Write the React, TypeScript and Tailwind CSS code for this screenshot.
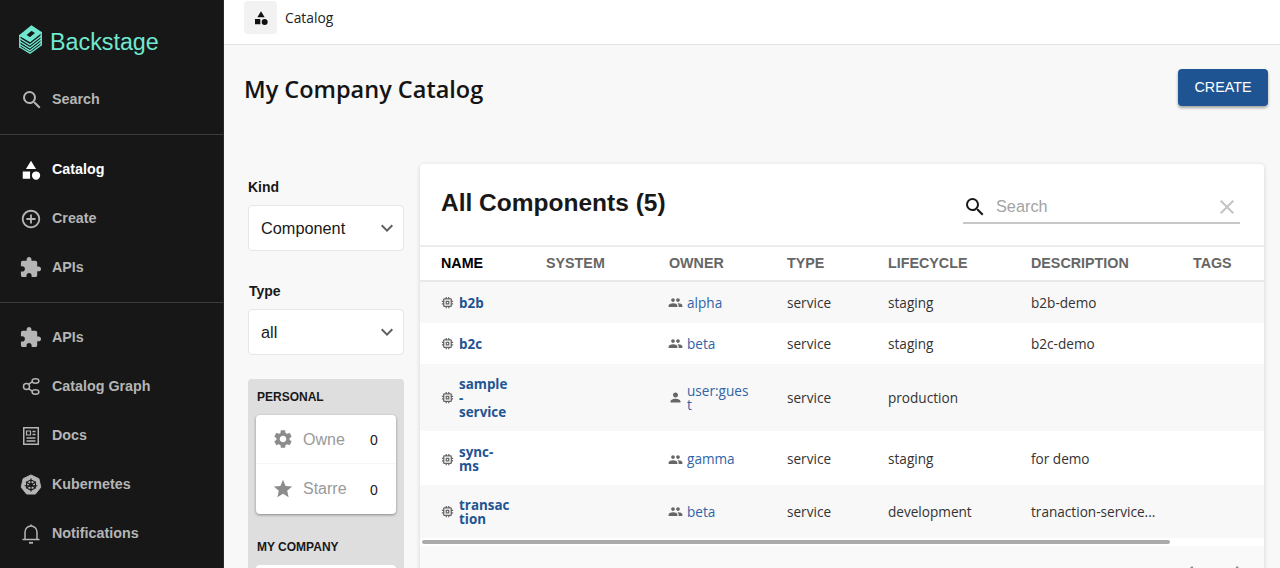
import React from "react";

const sans = "font-['Liberation_Sans',Arial,sans-serif]";
const body = "font-['Open_Sans','Noto_Sans',sans-serif]";

const I = ({ d, className = "" }: { d: string; className?: string }) => (
  <svg viewBox="0 0 24 24" fill="currentColor" className={className}><path d={d} /></svg>
);

const P = {
  search: "M15.5 14h-.79l-.28-.27A6.471 6.471 0 0 0 16 9.5 6.5 6.5 0 1 0 9.5 16c1.61 0 3.09-.59 4.23-1.57l.27.28v.79l5 4.99L20.49 19l-4.99-5zm-6 0C7.01 14 5 11.99 5 9.5S7.01 5 9.5 5 14 7.01 14 9.5 11.99 14 9.5 14z",
  category: "M12 2l-5.5 9h11L12 2zM17.5 13.5a4.5 4.5 0 1 0 0 9 4.5 4.5 0 0 0 0-9zM3 13.5h8v8H3z",
  add: "M13 7h-2v4H7v2h4v4h2v-4h4v-2h-4V7zm-1-5C6.49 2 2 6.49 2 12s4.49 10 10 10 10-4.49 10-10S17.51 2 12 2zm0 18c-4.41 0-8-3.59-8-8s3.59-8 8-8 8 3.59 8 8-3.59 8-8 8z",
  ext: "M20.5 11H19V7c0-1.1-.9-2-2-2h-4V3.5C13 2.12 11.88 1 10.5 1S8 2.12 8 3.5V5H4c-1.1 0-1.99.9-1.99 2v3.8H3.5c1.49 0 2.7 1.21 2.7 2.7s-1.21 2.7-2.7 2.7H2V20c0 1.1.9 2 2 2h3.8v-1.5c0-1.49 1.21-2.7 2.7-2.7 1.49 0 2.7 1.21 2.7 2.7V22H17c1.1 0 2-.9 2-2v-4h1.5c1.38 0 2.5-1.12 2.5-2.5S21.88 11 20.5 11z",
  chevron: "M7.41 8.59 12 13.17l4.59-4.58L18 10l-6 6-6-6z",
  gear: "M19.14 12.94c.04-.3.06-.61.06-.94 0-.32-.02-.64-.07-.94l2.03-1.58a.49.49 0 0 0 .12-.61l-1.92-3.32a.488.488 0 0 0-.59-.22l-2.39.96c-.5-.38-1.03-.7-1.62-.94l-.36-2.54a.484.484 0 0 0-.48-.41h-3.84c-.24 0-.43.17-.47.41l-.36 2.54c-.59.24-1.13.57-1.62.94l-2.39-.96c-.22-.08-.47 0-.59.22L2.74 8.87c-.12.21-.08.47.12.61l2.03 1.58c-.05.3-.09.63-.09.94s.02.64.07.94l-2.03 1.58a.49.49 0 0 0-.12.61l1.92 3.32c.12.22.37.29.59.22l2.39-.96c.5.38 1.03.7 1.62.94l.36 2.54c.05.24.24.41.48.41h3.84c.24 0 .44-.17.47-.41l.36-2.54c.59-.24 1.13-.56 1.62-.94l2.39.96c.22.08.47 0 .59-.22l1.92-3.32c.12-.22.07-.47-.12-.61l-2.01-1.58zM12 15.6c-1.98 0-3.6-1.62-3.6-3.6s1.62-3.6 3.6-3.6 3.6 1.62 3.6 3.6-1.62 3.6-3.6 3.6z",
  star: "M12 17.27 18.18 21l-1.64-7.03L22 9.24l-7.19-.61L12 2 9.19 8.63 2 9.24l5.46 4.73L5.82 21z",
  close: "M19 6.41 17.59 5 12 10.59 6.41 5 5 6.41 10.59 12 5 17.59 6.41 19 12 13.41 17.59 19 19 17.59 13.41 12z",
  memory: "M15 9H9v6h6V9zm-2 4h-2v-2h2v2zm8-2V9h-2V7c0-1.1-.9-2-2-2h-2V3h-2v2h-2V3H9v2H7c-1.1 0-2 .9-2 2v2H3v2h2v2H3v2h2v2c0 1.1.9 2 2 2h2v2h2v-2h2v2h2v-2h2c1.1 0 2-.9 2-2v-2h2v-2h-2v-2h2zm-4 6H7V7h10v10z",
  group: "M16 11c1.66 0 2.99-1.34 2.99-3S17.66 5 16 5s-3 1.34-3 3 1.34 3 3 3zm-8 0c1.66 0 2.99-1.34 2.99-3S9.66 5 8 5 5 6.34 5 8s1.34 3 3 3zm0 2c-2.33 0-7 1.17-7 3.5V19h14v-2.5C15 14.17 10.33 13 8 13zm8 0c-.29 0-.62.02-.97.05 1.16.84 1.97 1.97 1.97 3.45V19h6v-2.5c0-2.33-4.67-3.5-7-3.5z",
  person: "M12 12c2.21 0 4-1.79 4-4s-1.79-4-4-4-4 1.79-4 4 1.79 4 4 4zm0 2c-2.67 0-8 1.34-8 4v2h16v-2c0-2.66-5.33-4-8-4z",
  prev: "M15.41 7.41 14 6l-6 6 6 6 1.41-1.41L10.83 12z",
  next: "M10 6 8.59 7.41 13.17 12l-4.58 4.59L10 18l6-6z",
};

const Logo = () => (
  <svg viewBox="0 0 23 29" className="w-[23px] h-[29px] -mt-[6px] shrink-0 text-[#70e8d0]" fill="none" stroke="currentColor" strokeWidth="1.4" strokeLinejoin="round" strokeLinecap="round">
    <path fillRule="evenodd" fill="currentColor" d="M0.8 10.5 L12.5 1 L22.2 7.5 L11 16.5 Z M6.5 10 L11 13 L17 8 L12.5 5 Z" />
    <path d="M0.8 13.5 L11 19.8 L22.2 11" />
    <path d="M0.8 16.5 L11 22.8 L22.2 14" />
    <path d="M0.8 19.5 L11 25.8 L22.2 17" />
    <path d="M0.8 22 L11 28.2 L22.2 20" />
    <path d="M0.8 10.5 V22 M22.2 7.5 V20" />
  </svg>
);

const Graph = () => (
  <svg viewBox="0 0 18 17" className="w-[18px] h-[17px] ml-[2px]" fill="none" stroke="currentColor" strokeWidth="1.5">
    <circle cx="4.5" cy="8.5" r="3" />
    <ellipse cx="13.5" cy="3" rx="3.4" ry="2.2" />
    <ellipse cx="13.5" cy="14" rx="3.4" ry="2.2" />
    <path d="M6.5 6.3 L10.5 3.6 M6.5 10.7 L10.5 13.4" />
  </svg>
);

const Docs = () => (
  <svg viewBox="0 0 16 18" className="w-[16px] h-[18px] ml-[3px]" fill="none" stroke="currentColor" strokeWidth="1.5">
    <rect x="0.75" y="0.75" width="14.5" height="16.5" />
    <path d="M3.5 4 H7.5 V8 H3.5 Z" strokeWidth="1.2" />
    <path d="M9.5 4.5 H12.5 M9.5 7.5 H12.5 M3.5 11 H12.5 M3.5 14 H12.5" strokeWidth="1.3" />
  </svg>
);

const Bell = () => (
  <svg viewBox="0 0 18 20" className="w-[18px] h-[20px] ml-[2px]" fill="none" stroke="currentColor" strokeWidth="1.5">
    <path d="M3 15 V8 a6 6 0 0 1 12 0 V15" />
    <path d="M0.5 15.5 H17.5" />
    <path d="M9 0.5 V2" />
    <path d="M7 18.8 H11" strokeWidth="1.8" />
  </svg>
);

const Kube = () => (
  <svg viewBox="0 0 24 24" className="w-[22px] h-[22px]">
    <path d="M12 1 L20.6 5.1 L22.7 14.4 L16.8 21.9 H7.2 L1.3 14.4 L3.4 5.1 Z" fill="#b5b5b5" stroke="#b5b5b5" strokeLinejoin="round" />
    <g stroke="#171717" strokeWidth="1.3" fill="none">
      <circle cx="12" cy="12" r="5" />
      <circle cx="12" cy="12" r="1.4" fill="#171717" />
      <path d="M12 5v14M6.5 8.5l11 7M17.5 8.5l-11 7M5 12.8h14" />
    </g>
  </svg>
);

const NavItem = ({ icon, label, active }: { icon: React.ReactNode; label: string; active?: boolean }) => (
  <div className={`h-[49px] flex items-center ${sans} text-[14.3px] font-bold ${active ? "text-white" : "text-[#b5b5b5]"}`}>
    <div className="w-[52px] pl-[20px] shrink-0 flex items-center">{icon}</div>
    {label}
  </div>
);

const Select = ({ value }: { value: string }) => (
  <div className={`h-[46px] bg-white border border-[#e6e6e6] rounded-[4px] flex items-center justify-between pl-[12px] pr-[4px] ${sans} text-[16.3px] text-[#181818]`}>
    {value}
    <I d={P.chevron} className="w-[24px] h-[24px] text-[#616161]" />
  </div>
);

const Filter = ({ d, label, top }: { d: string; label: string; top?: boolean }) => (
  <div className={`flex items-center pl-[16px] ${top ? "h-[49px] border-b border-[#f5f5f5]" : "h-[50px]"}`}>
    <I d={d} className="w-[22px] h-[22px] text-[#8c8c8c] mr-[9px] shrink-0" />
    <span className={`${sans} text-[16px] text-[#999] w-[46px] whitespace-nowrap ${top ? "mt-[1px]" : ""}`}>{label}</span>
    <span className={`${sans} text-[14px] text-[#181818] ml-[21px] mt-[2px]`}>0</span>
  </div>
);

const cols = ["w-[106px]", "w-[123px]", "w-[118px]", "w-[101px]", "w-[143px]", "w-[162px]", "w-[91px]"];
const heads = ["NAME", "SYSTEM", "OWNER", "TYPE", "LIFECYCLE", "DESCRIPTION", "TAGS"];

const rows = [
  { name: ["b2b"], owner: ["alpha"], icon: P.group, life: "staging", desc: "b2b-demo", h: "h-[41px]", gray: true },
  { name: ["b2c"], owner: ["beta"], icon: P.group, life: "staging", desc: "b2c-demo", h: "h-[41px]", gray: false },
  { name: ["sample", "-", "service"], owner: ["user:gues", "t"], icon: P.person, life: "production", desc: "", h: "h-[67px]", gray: true },
  { name: ["sync-", "ms"], owner: ["gamma"], icon: P.group, life: "staging", desc: "for demo", h: "h-[54px] pt-[2px]", gray: false },
  { name: ["transac", "tion"], owner: ["beta"], icon: P.group, life: "development", desc: "tranaction-service...", h: "h-[53px]", gray: true },
];

const Stack = ({ lines }: { lines: string[] }) => (
  <span className="flex flex-col">{lines.map((l, i) => <span key={i}>{l}</span>)}</span>
);

export default function App() {
  return (
    <div className="h-[568px] w-[1280px] overflow-hidden flex bg-[#f8f8f8]">
      <aside className="w-[224px] shrink-0 bg-[#171717] border-r border-[#2a2a2a] flex flex-col">
        <div className="h-[75px] shrink-0 flex items-center pl-[19px] gap-[8px] pt-[10px]">
          <Logo />
          <span className={`${sans} text-[23.3px] text-[#70e8d0] leading-none`}>Backstage</span>
        </div>
        <NavItem label="Search" icon={<I d={P.search} className="w-[24px] h-[24px]" />} />
        <div className="h-[1px] bg-[#3d3d3d] mt-[10px]" />
        <div className="h-[10px]" />
        <NavItem active label="Catalog" icon={<I d={P.category} className="w-[22px] h-[22px] text-white" />} />
        <NavItem label="Create" icon={<I d={P.add} className="w-[22px] h-[22px]" />} />
        <NavItem label="APIs" icon={<I d={P.ext} className="w-[23px] h-[23px] -ml-[1px]" />} />
        <div className="h-[1px] bg-[#3d3d3d] mt-[10px]" />
        <div className="h-[10px]" />
        <NavItem label="APIs" icon={<I d={P.ext} className="w-[23px] h-[23px] -ml-[1px]" />} />
        <NavItem label="Catalog Graph" icon={<Graph />} />
        <NavItem label="Docs" icon={<Docs />} />
        <NavItem label="Kubernetes" icon={<Kube />} />
        <NavItem label="Notifications" icon={<Bell />} />
      </aside>

      <div className="flex-1 flex flex-col min-w-0">
        <header className="h-[45px] shrink-0 bg-white border-b border-[#e3e3e3] flex items-start pl-[20px] pt-[1px]">
          <div className="w-[33px] h-[33px] rounded-[4px] bg-[#f2f2f2] flex items-center justify-center">
            <I d={P.category} className="w-[16px] h-[16px] text-[#111]" />
          </div>
          <span className={`${body} text-[13.8px] leading-[33px] text-[#222] ml-[8px]`}>Catalog</span>
        </header>

        <div className="flex justify-between items-start pl-[21px] pr-[12px] pt-[24px] h-[119px] shrink-0">
          <h1 className={`${body} text-[23.5px] leading-[40px] font-semibold text-[#141414] -ml-[1px]`}>My Company Catalog</h1>
          <button className={`${sans} w-[90px] h-[37px] rounded-[4px] bg-[#1f5493] text-white text-[14.3px] shadow-[0_2px_3px_rgba(0,0,0,0.35)]`}>CREATE</button>
        </div>

        <div className="flex items-start">
          <div className="w-[156px] ml-[24px] shrink-0 pt-[15px]">
            <div className={`${sans} text-[14px] font-bold text-[#181818] leading-[16px] mb-[10px]`}>Kind</div>
            <Select value="Component" />
            <div className={`${sans} text-[14px] font-bold text-[#181818] leading-[16px] mt-[32px] mb-[10px] ml-[1px]`}>Type</div>
            <Select value="all" />
            <div className="mt-[24px] bg-[#dedede] rounded-[4px] px-[8px] pt-[11px] h-[200px]">
              <div className={`${sans} text-[12px] font-bold text-[#181818] leading-[15px] mb-[10px] ml-[1px]`}>PERSONAL</div>
              <div className="bg-white rounded-[4px] shadow-[0_1px_3px_rgba(0,0,0,0.4)]">
                <Filter d={P.gear} label="Owne" top />
                <Filter d={P.star} label="Starre" />
              </div>
              <div className={`${sans} text-[12px] font-bold text-[#181818] leading-[15px] mt-[26px] mb-[10px] ml-[1px]`}>MY COMPANY</div>
              <div className="bg-white rounded-[4px] h-[60px]" />
            </div>
          </div>

          <div className="ml-[16px] w-[844px] shrink-0 bg-white rounded-[4px] shadow-[0_1px_4px_rgba(0,0,0,0.16)]">
            <div className="h-[83px] flex items-start justify-between pl-[21px] pr-[24px] border-b-2 border-[#ececec]">
              <h2 className={`${sans} mt-[23px] text-[24.5px] leading-[32px] font-bold text-[#181818]`}>All Components (5)</h2>
              <div className="w-[277px] h-[38px] mt-[22px] pt-[5px] flex items-center border-b-2 border-[#c8c8c8] pr-[1px]">
                <I d={P.search} className="w-[24px] h-[24px] text-[#181818]" />
                <span className={`${sans} ml-[9px] flex-1 text-[16.3px] text-[#a3a3a3]`}>Search</span>
                <I d={P.close} className="w-[24px] h-[24px] text-[#c4c4c4]" />
              </div>
            </div>

            <div className={`flex h-[35px] items-center border-b-2 border-[#e8e8e8] ${sans} text-[14.3px] font-bold text-[#666]`}>
              {heads.map((h, i) => (
                <div key={h} className={`${cols[i]} ${i === 0 ? "pl-[21px] text-black" : "pl-[20px]"}`}>{h}</div>
              ))}
            </div>

            {rows.map((r, idx) => (
              <div key={idx} className={`flex items-center ${r.h} ${r.gray ? "bg-[#f8f8f8]" : "bg-white"} ${body} text-[13.6px] leading-[14px] text-[#333]`}>
                <div className={`${cols[0]} pl-[20px] flex items-center`}>
                  <I d={P.memory} className="w-[15px] h-[15px] text-[#666] shrink-0 mr-[4px]" />
                  <span className="font-bold text-[#1f5493] text-[13.4px]"><Stack lines={r.name} /></span>
                </div>
                <div className={cols[1]} />
                <div className={`${cols[2]} pl-[19px] flex items-center`}>
                  <I d={r.icon} className="w-[15px] h-[15px] text-[#666] shrink-0 mr-[4px]" />
                  <span className="text-[#2f64a5]"><Stack lines={r.owner} /></span>
                </div>
                <div className={`${cols[3]} pl-[20px]`}>service</div>
                <div className={`${cols[4]} pl-[20px]`}>{r.life}</div>
                <div className={`${cols[5]} pl-[20px] whitespace-nowrap`}>{r.desc}</div>
                <div className={cols[6]} />
              </div>
            ))}

            <div className="h-[8px] bg-white pt-[2px] pl-[2px]">
              <div className="h-[4px] w-[748px] rounded-full bg-[#ababab]" />
            </div>
            <div className="h-[40px] bg-[#f9f9f9] flex justify-end items-start gap-[25px] pt-[14px] pr-[13px]">
              <I d={P.prev} className="w-[24px] h-[24px] text-[#8c8c8c]" />
              <I d={P.next} className="w-[24px] h-[24px] text-[#8c8c8c]" />
            </div>
          </div>
        </div>
      </div>
    </div>
  );
}
